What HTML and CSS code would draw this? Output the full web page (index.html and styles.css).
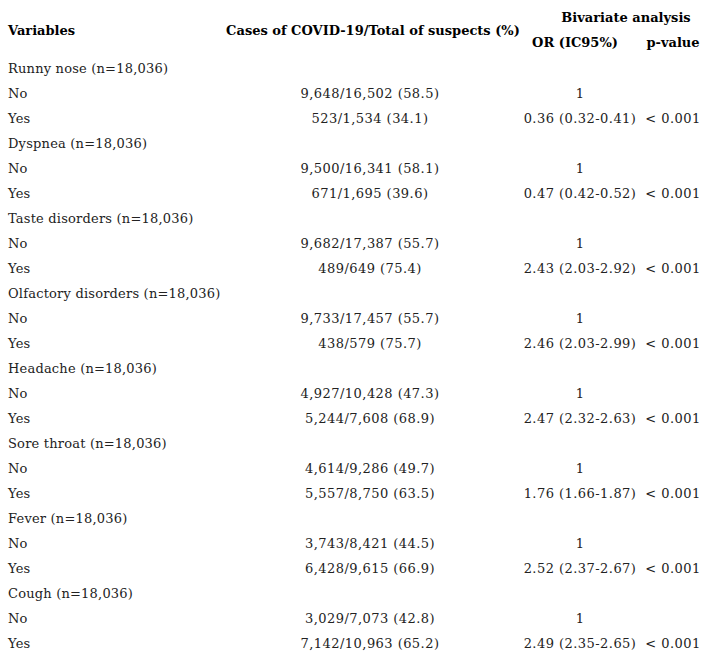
FILE: index.html
```html
<!DOCTYPE html>
<html>
<head>
<meta charset="utf-8">
<link rel="stylesheet" href="styles.css">
</head>
<body>
<table class="tbl">
  <colgroup>
    <col class="c1"><col class="c2"><col class="c3"><col class="c4">
  </colgroup>
  <thead>
    <tr class="h1">
      <th rowspan="2" class="var"><span class="ht">Variables</span></th>
      <th rowspan="2" class="cases"><span class="ht">Cases of COVID-19/Total of suspects (%)</span></th>
      <th colspan="2" class="biv"><span class="ht">Bivariate analysis</span></th>
    </tr>
    <tr class="h2">
      <th class="or"><span class="ht">OR (IC95%)</span></th>
      <th class="pv"><span class="ht">p-value</span></th>
    </tr>
  </thead>
  <tbody>
    <tr><td>Runny nose (n=18,036)</td><td></td><td></td><td></td></tr>
    <tr><td>No</td><td class="num">9,648/16,502 (58.5)</td><td class="num">1</td><td></td></tr>
    <tr><td>Yes</td><td class="num">523/1,534 (34.1)</td><td class="num">0.36 (0.32-0.41)</td><td class="num">&lt; 0.001</td></tr>
    <tr><td>Dyspnea (n=18,036)</td><td></td><td></td><td></td></tr>
    <tr><td>No</td><td class="num">9,500/16,341 (58.1)</td><td class="num">1</td><td></td></tr>
    <tr><td>Yes</td><td class="num">671/1,695 (39.6)</td><td class="num">0.47 (0.42-0.52)</td><td class="num">&lt; 0.001</td></tr>
    <tr><td>Taste disorders (n=18,036)</td><td></td><td></td><td></td></tr>
    <tr><td>No</td><td class="num">9,682/17,387 (55.7)</td><td class="num">1</td><td></td></tr>
    <tr><td>Yes</td><td class="num">489/649 (75.4)</td><td class="num">2.43 (2.03-2.92)</td><td class="num">&lt; 0.001</td></tr>
    <tr><td>Olfactory disorders (n=18,036)</td><td></td><td></td><td></td></tr>
    <tr><td>No</td><td class="num">9,733/17,457 (55.7)</td><td class="num">1</td><td></td></tr>
    <tr><td>Yes</td><td class="num">438/579 (75.7)</td><td class="num">2.46 (2.03-2.99)</td><td class="num">&lt; 0.001</td></tr>
    <tr><td>Headache (n=18,036)</td><td></td><td></td><td></td></tr>
    <tr><td>No</td><td class="num">4,927/10,428 (47.3)</td><td class="num">1</td><td></td></tr>
    <tr><td>Yes</td><td class="num">5,244/7,608 (68.9)</td><td class="num">2.47 (2.32-2.63)</td><td class="num">&lt; 0.001</td></tr>
    <tr><td>Sore throat (n=18,036)</td><td></td><td></td><td></td></tr>
    <tr><td>No</td><td class="num">4,614/9,286 (49.7)</td><td class="num">1</td><td></td></tr>
    <tr><td>Yes</td><td class="num">5,557/8,750 (63.5)</td><td class="num">1.76 (1.66-1.87)</td><td class="num">&lt; 0.001</td></tr>
    <tr><td>Fever (n=18,036)</td><td></td><td></td><td></td></tr>
    <tr><td>No</td><td class="num">3,743/8,421 (44.5)</td><td class="num">1</td><td></td></tr>
    <tr><td>Yes</td><td class="num">6,428/9,615 (66.9)</td><td class="num">2.52 (2.37-2.67)</td><td class="num">&lt; 0.001</td></tr>
    <tr><td>Cough (n=18,036)</td><td></td><td></td><td></td></tr>
    <tr><td>No</td><td class="num">3,029/7,073 (42.8)</td><td class="num">1</td><td></td></tr>
    <tr><td>Yes</td><td class="num">7,142/10,963 (65.2)</td><td class="num">2.49 (2.35-2.65)</td><td class="num">&lt; 0.001</td></tr>
  </tbody>
</table>
</body>
</html>
```
FILE: styles.css
```css
html, body {
  margin: 0;
  padding: 0;
  background: #fff;
}
body {
  padding: 6px 0 0 8px;
  font-family: "DejaVu Serif", serif;
  font-size: 13px;
  letter-spacing: 0.2px;
  color: #222;
}
.tbl {
  border-collapse: collapse;
  table-layout: fixed;
  width: 698px;
}
.c1 { width: 190px; }
.c2 { width: 322px; }
.c3 { width: 120px; }
.c4 { width: 66px; }
.tbl th, .tbl td {
  padding: 0;
  white-space: nowrap;
}
.tbl th {
  color: #000;
  font-weight: bold;
  letter-spacing: 0;
  height: 25px;
}
.ht {
  position: relative;
  top: -1px;
}
.tbl td { height: 25px; text-align: left; }
.tbl td.num { text-align: center; letter-spacing: 0.45px; }
.tbl td.num:nth-child(2) { padding-left: 22px; }
.tbl th.var { text-align: left; }
.tbl th.cases { text-align: center; padding-left: 28px; }
.tbl th.biv { text-align: center; padding-left: 26px; }
.tbl th.or { text-align: center; padding-right: 10px; }
.tbl th.pv { text-align: center; }
```
